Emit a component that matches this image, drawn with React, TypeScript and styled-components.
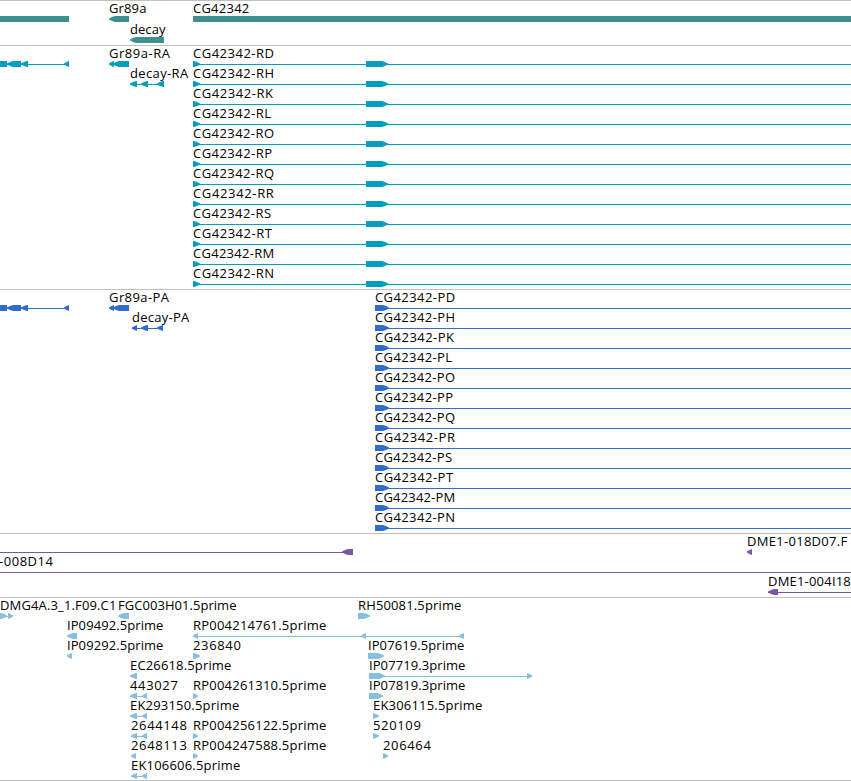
import { useState } from 'react';
import styled, { createGlobalStyle } from 'styled-components';

const VIEW_WIDTH = 851;
const FONT = '13px "Open Sans", "Noto Sans", sans-serif';

type Direction = 'left' | 'right';

// [start, end, direction], no direction draws a plain block
type Block = [number, number, Direction?];

// [text, start, end]
type LabelData = [string, number, number];

interface RowData {
  labels: LabelData[];
  blocks: Block[];
  lines?: [number, number][];
}

interface TrackData {
  name: string;
  color: string;
  rowHeight: number;
  gap: number;
  rows: RowData[];
}

const GlobalStyle = createGlobalStyle`
  body {
    margin: 0;
    background: #fff;
    overflow: hidden;
  }
`;

const Browser = styled.main`
  width: ${VIEW_WIDTH}px;
  display: flex;
  flex-direction: column;
  overflow: hidden;
  border-bottom: 1px solid #c0c0c0;
`;

const TrackPanel = styled.section<{ $gap: number; $color: string }>`
  display: flex;
  flex-direction: column;
  border-top: 1px solid #c0c0c0;
  padding-bottom: ${({ $gap }) => $gap}px;
  color: ${({ $color }) => $color};
`;

const RowBox = styled.div<{ $height: number }>`
  display: flex;
  flex-direction: column;
  height: ${({ $height }) => $height}px;
`;

const Labels = styled.div`
  display: grid;
  grid-template-columns: 100%;
  height: 15px;
`;

const Label = styled.span<{ $start: number }>`
  grid-area: 1 / 1;
  margin-left: ${({ $start }) => $start}px;
  color: #000;
  font: ${FONT};
  line-height: 15px;
  white-space: pre;
`;

const Strip = styled.svg`
  display: block;
  flex: none;
  fill: currentColor;
`;

const context = document.createElement('canvas').getContext('2d')!;

const getSpacing = (text: string, width: number) => {
  context.font = FONT;
  return (width - context.measureText(text).width) / text.length;
};

const getBlockPath = ([start, end, direction]: Block) => {
  if (!direction) return `M${start} 0H${end}V6H${start}Z`;

  const tip = direction === 'left' ? start : end;
  const base = direction === 'left' ? end : start;
  const sign = direction === 'left' ? 1 : -1;
  const head = Math.min(6, end - start);
  const shoulder = tip + sign * head;
  const middle = tip + sign * head * 0.5;
  return `M${tip} 2.5L${middle} 1L${shoulder} 0H${base}V6H${shoulder}L${middle} 5L${tip} 3.5Z`;
};

const Row = ({ row, height }: { row: RowData; height: number }) => (
  <RowBox $height={height}>
    <Labels>
      {row.labels.map(([text, start, end]) => (
        <Label key={text} $start={start} style={{ letterSpacing: getSpacing(text, end - start + 0.5) }}>
          {text}
        </Label>
      ))}
    </Labels>
    <Strip width={VIEW_WIDTH} height={6}>
      {row.lines?.map(([start, end]) => (
        <rect key={start} x={start} y={3} width={end - start} height={1} />
      ))}
      {row.blocks.map((block) => (
        <path key={block[0]} d={getBlockPath(block)} />
      ))}
    </Strip>
  </RowBox>
);

const isoforms = ['D', 'H', 'K', 'L', 'O', 'P', 'Q', 'R', 'S', 'T', 'M', 'N'];

const labelEnds: Record<string, number> = { K: 273, L: 271, P: 272, S: 271, T: 272 };

const getTranscriptRow = (letter: string): RowData => ({
  labels: [[`CG42342-R${letter}`, 193, labelEnds[letter] ?? 274]],
  blocks: [
    [193, 200, 'right'],
    [366, 388, 'right'],
  ],
  lines: [[193, VIEW_WIDTH]],
});

const getProteinRow = (letter: string): RowData => ({
  labels: [[`CG42342-P${letter}`, 375, (labelEnds[letter] ?? 274) + 181]],
  blocks: [[375, 389, 'right']],
  lines: [[375, VIEW_WIDTH]],
});

const transcripts = isoforms.map(getTranscriptRow);
transcripts[0].labels.push(['Gr89a-RA', 109, 170]);
transcripts[0].blocks.push([0, 7], [7, 21, 'left'], [21, 28, 'left'], [64, 69, 'left'], [109, 114, 'left'], [113, 129, 'left']);
transcripts[0].lines!.push([0, 69]);
transcripts[1].labels.push(['decay-RA', 130, 188]);
transcripts[1].blocks.push([130, 137, 'left'], [141, 148, 'left'], [157, 164, 'left']);
transcripts[1].lines!.push([130, 164]);

const proteins = isoforms.map(getProteinRow);
proteins[0].labels.push(['Gr89a-PA', 109, 169]);
proteins[0].blocks.push([0, 7], [7, 21, 'left'], [21, 28, 'left'], [64, 69, 'left'], [109, 114, 'left'], [113, 129, 'left']);
proteins[0].lines!.push([0, 69]);
proteins[1].labels.push(['decay-PA', 132, 189]);
proteins[1].blocks.push([132, 137, 'left'], [141, 148, 'left'], [157, 163, 'left']);
proteins[1].lines!.push([132, 163]);

const tracks: TrackData[] = [
  {
    name: 'genes',
    color: '#3f8f94',
    rowHeight: 21,
    gap: 2,
    rows: [
      {
        labels: [
          ['Gr89a', 109, 146],
          ['CG42342', 193, 249],
        ],
        blocks: [[0, 69], [109, 129, 'left'], [193, VIEW_WIDTH]],
      },
      { labels: [['decay', 130, 165]], blocks: [[130, 164, 'left']] },
    ],
  },
  { name: 'transcripts', color: '#009fbf', rowHeight: 20, gap: 3, rows: transcripts },
  { name: 'proteins', color: '#306ccf', rowHeight: 20, gap: 3, rows: proteins },
  {
    name: 'clones',
    color: '#7757a7',
    rowHeight: 20,
    gap: 3,
    rows: [
      {
        labels: [['DME1-018D07.F', 747, 847]],
        blocks: [[342, 353, 'left'], [747, 752, 'left']],
        lines: [[0, 353]],
      },
      { labels: [['-008D14', -1, 53]], blocks: [], lines: [[0, VIEW_WIDTH]] },
      { labels: [['DME1-004I18', 768, 850.5]], blocks: [[768, 778, 'left']], lines: [[768, VIEW_WIDTH]] },
    ],
  },
  {
    name: 'ests',
    color: '#87bfdf',
    rowHeight: 20,
    gap: 2,
    rows: [
      {
        labels: [
          ['DMG4A.3_1.F09.C1', 0, 116],
          ['FGC003H01.5prime', 118, 236],
          ['RH50081.5prime', 358, 461],
        ],
        blocks: [[0, 7, 'right'], [8, 13, 'right'], [118, 129, 'left'], [358, 370, 'right']],
        lines: [[0, 13]],
      },
      {
        labels: [
          ['IP09492.5prime', 67, 163],
          ['RP004214761.5prime', 193, 326],
        ],
        blocks: [[67, 77, 'left'], [193, 198, 'left'], [361, 366, 'left'], [459, 464, 'left']],
        lines: [[193, 464]],
      },
      {
        labels: [
          ['IP09292.5prime', 67, 163],
          ['236840', 193, 241],
          ['IP07619.5prime', 368, 464],
        ],
        blocks: [[67, 72, 'left'], [193, 200, 'right'], [368, 384, 'right']],
      },
      {
        labels: [
          ['EC26618.5prime', 130, 231],
          ['IP07719.3prime', 369, 465],
        ],
        blocks: [[130, 137, 'left'], [369, 385, 'right'], [527, 532, 'right']],
        lines: [[369, 532]],
      },
      {
        labels: [
          ['443027', 130, 178],
          ['RP004261310.5prime', 193, 326],
          ['IP07819.3prime', 369, 465],
        ],
        blocks: [[130, 137, 'left'], [142, 147, 'left'], [193, 198, 'right'], [369, 383, 'right']],
        lines: [[130, 147]],
      },
      {
        labels: [
          ['EK293150.5prime', 130, 239],
          ['EK306115.5prime', 373, 482],
        ],
        blocks: [[130, 137, 'left'], [142, 147, 'left'], [373, 379, 'right']],
        lines: [[130, 147]],
      },
      {
        labels: [
          ['2644148', 131, 187],
          ['RP004256122.5prime', 193, 326],
          ['520109', 373, 421],
        ],
        blocks: [[131, 137, 'left'], [142, 147, 'left'], [193, 198, 'right'], [373, 379, 'right']],
        lines: [[131, 147]],
      },
      {
        labels: [
          ['2648113', 131, 187],
          ['RP004247588.5prime', 193, 326],
          ['206464', 383, 431],
        ],
        blocks: [[131, 136, 'left'], [193, 198, 'right'], [383, 388, 'right']],
      },
      {
        labels: [['EK106606.5prime', 131, 240]],
        blocks: [[131, 137, 'left'], [142, 147, 'left']],
        lines: [[131, 147]],
      },
    ],
  },
];

const App = () => {
  const [visibleTracks] = useState(tracks);

  return (
    <>
      <GlobalStyle />
      <Browser>
        {visibleTracks.map((track) => (
          <TrackPanel key={track.name} $gap={track.gap} $color={track.color}>
            {track.rows.map((row, index) => (
              <Row key={index} row={row} height={track.rowHeight} />
            ))}
          </TrackPanel>
        ))}
      </Browser>
    </>
  );
};

export default App;
